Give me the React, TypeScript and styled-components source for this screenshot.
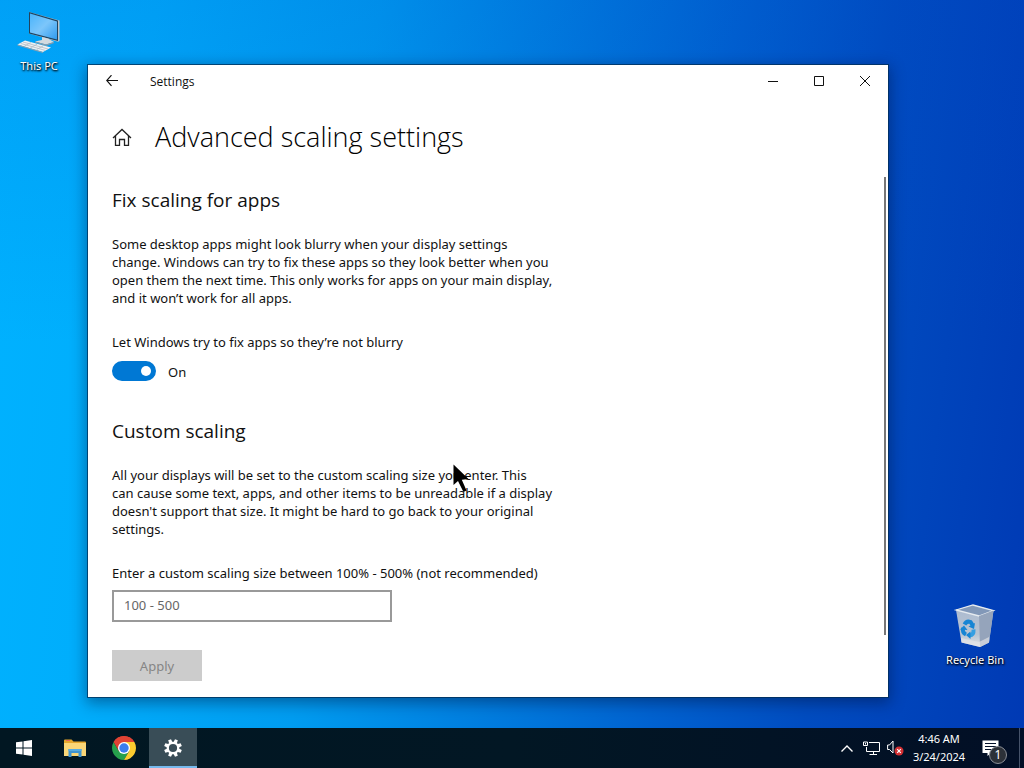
import React, { useState } from "react";
import styled, { createGlobalStyle } from "styled-components";

const headingFont = `"Open Sans", "Noto Sans", sans-serif`;

const GlobalStyle = createGlobalStyle`
  *, *::before, *::after { box-sizing: border-box; }
  body {
    margin: 0;
    color: #111;
    font-family: "Noto Sans", "Open Sans", sans-serif;
    font-size: 13px;
    line-height: 18px;
  }
  button, input { font: inherit; color: inherit; }
  h1, h2, p { margin: 0; font-weight: 400; }
`;

const Screen = styled.div`
  display: flex;
  flex-direction: column;
  min-height: 100vh;
  background:
    linear-gradient(180deg, rgba(0, 70, 200, 0.16) 0%, rgba(0, 120, 230, 0) 45%),
    linear-gradient(97deg, #00b2ff 0%, #00aefc 14%, #009cf0 34%, #007fe0 50%, #0062d0 66%, #004cc0 80%, #0039b4 100%);
`;

const Desktop = styled.main`
  position: relative;
  flex: 1;
  padding: 65px 136px 31px 88px;
`;

const DesktopIcon = styled.button<{ $corner: "start" | "end" }>`
  position: absolute;
  ${(p) => (p.$corner === "start" ? "top: 10px; left: 0;" : "bottom: 60px; right: 10px;")}
  display: flex;
  flex-direction: column;
  align-items: center;
  gap: 4px;
  width: 78px;
  padding: 0;
  border: 0;
  background: none;
  color: #fff;
  font-size: 11px;
  line-height: 16px;
  white-space: nowrap;
  text-shadow: 1px 1px 2px #000, 0 1px 2px rgba(0, 0, 0, 0.8);
`;

const Window = styled.section`
  position: relative;
  background: #fff;
  box-shadow: 0 0 0 1px rgba(0, 45, 85, 0.75), 0 4px 14px 2px rgba(0, 15, 50, 0.42);
`;

const TitleBar = styled.header`
  display: flex;
  align-items: stretch;
  height: 32px;
`;

const BackButton = styled.button`
  display: grid;
  place-items: center;
  width: 48px;
  padding: 0;
  border: 0;
  background: none;
`;

const WindowTitle = styled.span`
  flex: 1;
  padding-left: 14px;
  font-family: ${headingFont};
  font-size: 12px;
  line-height: 34px;
`;

const CaptionButton = styled.button`
  display: grid;
  place-items: center;
  width: 46px;
  padding: 0;
  border: 0;
  background: none;
`;

const PageHeader = styled.div`
  display: flex;
  align-items: center;
  gap: 23px;
  padding: 20px 24px 0;
`;

const HomeLink = styled.a`
  display: flex;
  color: inherit;
`;

const PageTitle = styled.h1`
  color: #000;
  font-family: ${headingFont};
  font-size: 27px;
  font-weight: 350;
  line-height: 40px;
`;

const Content = styled.div`
  padding: 31px 24px 16px;
`;

const Section = styled.section`
  & + & { margin-top: 36px; }
`;

const SectionTitle = styled.h2`
  margin-bottom: 23px;
  font-family: ${headingFont};
  font-size: 19px;
  line-height: 24px;
`;

const Description = styled.p`
  max-width: 445px;
  margin-bottom: 26px;
`;

const FieldLabel = styled.label`
  display: block;
`;

const ToggleRow = styled.div`
  display: flex;
  align-items: flex-start;
  gap: 12px;
  margin-top: 10px;
  line-height: 22px;
`;

const Toggle = styled.input`
  appearance: none;
  display: flex;
  align-items: center;
  width: 44px;
  height: 20px;
  margin: 0;
  padding: 0 5px;
  border: 2px solid #333;
  border-radius: 10px;

  &::before {
    content: "";
    width: 10px;
    height: 10px;
    border-radius: 50%;
    background: #333;
  }
  &:checked {
    justify-content: flex-end;
    padding: 0 3px;
    border-color: #0078d4;
    background: #0078d4;
  }
  &:checked::before { background: #fff; }
`;

const SizeInput = styled.input`
  display: block;
  width: 280px;
  max-width: 100%;
  height: 32px;
  margin-top: 8px;
  padding: 0 10px 2px;
  border: 2px solid #999;
  border-radius: 0;
  background: #fff;
  &::placeholder { color: #666; opacity: 1; }
`;

const ApplyButton = styled.button`
  display: block;
  width: 90px;
  height: 31px;
  margin-top: 28px;
  padding: 0;
  border: 0;
  background: #ccc;
  &:disabled { color: #858585; }
`;

const ScrollThumb = styled.div`
  position: absolute;
  top: 112px;
  right: 2px;
  bottom: 62px;
  width: 2px;
  background: #777;
`;

const Pointer = styled.svg`
  position: absolute;
  top: 464px;
  left: 453px;
`;

const Taskbar = styled.footer`
  display: flex;
  height: 40px;
  color: #fff;
  background: linear-gradient(90deg, #011722 0%, #021724 50%, #020f26 100%);
`;

const TaskList = styled.nav`
  display: flex;
  flex: 1;
  gap: 1px;
`;

const TaskButton = styled.button<{ $active?: boolean; $start?: boolean }>`
  display: grid;
  place-items: center;
  width: ${(p) => (p.$start ? 50 : 48)}px;
  padding: ${(p) => (p.$active ? "2px 0 0" : p.$start ? "0 2px 0 0" : "0")};
  border: 0;
  border-bottom: ${(p) => (p.$active ? "2px solid #76b9ed" : "0")};
  background: ${(p) => (p.$active ? "#394d57" : "none")};
`;

const Tray = styled.div`
  display: flex;
  align-items: stretch;
`;

const TrayButton = styled.button<{ $width: number }>`
  display: grid;
  place-items: center;
  width: ${(p) => p.$width}px;
  padding: 0;
  border: 0;
  background: none;
`;

const Clock = styled.button`
  width: 64px;
  padding: 0;
  border: 0;
  background: none;
  font-size: 11px;
  line-height: 18px;
  white-space: nowrap;
`;

const Time = styled.span`
  display: block;
`;

const ActionCenter = styled.button`
  position: relative;
  display: grid;
  place-items: center;
  width: 48px;
  padding: 0 10px 0 0;
  border: 0;
  background: none;
`;

const Badge = styled.span`
  position: absolute;
  right: 12px;
  bottom: 4px;
  width: 18px;
  height: 18px;
  border: 1px solid #8b8f96;
  border-radius: 50%;
  background: #2c3138;
  font-size: 12px;
  line-height: 16px;
  text-align: center;
`;

const ShowDesktop = styled.button`
  width: 5px;
  padding: 0;
  border: 0;
  border-left: 1px solid #46536a;
  background: none;
`;

const ComputerIcon = () => (
  <svg width="44" height="44" viewBox="0 0 44 44" aria-hidden="true">
    <defs>
      <linearGradient id="screen" x1="0" y1="0" x2="1" y2="1">
        <stop offset="0" stopColor="#49b4fb" />
        <stop offset="0.5" stopColor="#7cc6fb" />
        <stop offset="1" stopColor="#2f9aee" />
      </linearGradient>
    </defs>
    <path d="M12 2 L42.500 10.500 V31 L41 31.800 L12 23.500 Z" fill="#b9c4cc" />
    <path d="M12 2 L41 10.500 V31 L12 23.500 Z" fill="#21435e" />
    <path d="M13 3.500 L40 11.400 V29.600 L13 22.600 Z" fill="url(#screen)" />
    <path d="M25 27 L31 28.400 L37 32 L29 34.500 L18 31.400 L25 30 Z" fill="#d3dadf" />
    <path d="M18 31.400 L29 34.500 L37 32 V33 L29 36 L18 32.600 Z" fill="#8b9ba8" />
    <path d="M8 30.500 L34 37.500 L26 42 L0.500 34.500 Z" fill="#eef1f3" />
    <path d="M0.500 34.500 L26 42 V43 L0.500 35.500 Z" fill="#8fa0ad" />
    <path d="M6 32 L31 39 M3.500 33.400 L28.500 40.500 M14 32.500 L7.500 36 M20 34.200 L13.500 37.800 M26 36 L19.500 39.600" stroke="#b3bdc5" strokeWidth="0.8" fill="none" />
  </svg>
);

const RecycleIcon = () => (
  <svg width="44" height="44" viewBox="0 0 44 44" aria-hidden="true">
    <defs>
      <linearGradient id="bin" x1="0" y1="0" x2="0" y2="1">
        <stop offset="0" stopColor="#a9b9d0" />
        <stop offset="0.7" stopColor="#b9c4d2" />
        <stop offset="1" stopColor="#e0e3e6" />
      </linearGradient>
    </defs>
    <path d="M3 6 L20 1 L40.500 6.500 L36 38.500 L27 43 L8.500 38.500 Z" fill="url(#bin)" />
    <path d="M3 6 L20 1 L40.500 6.500 L26 12 Z" fill="#8298b8" stroke="#e6ebf0" strokeWidth="1.300" />
    <path d="M26 12 L40.500 6.500 L36 38.500 L27 43 Z" fill="#95a4bb" />
    <path d="M8 34 L26 38 L36 33 L36 38.500 L27 43 L8.500 38.500 Z" fill="#e3e5e8" opacity="0.65" />
    <g fill="none" stroke="#1685d4" strokeWidth="4">
      <path d="M11.500 20.500 Q13.500 16.500 17.500 18 L19.500 21" />
      <path d="M10 24 Q9 28.500 13 30.500" />
      <path d="M16.500 31.500 Q21 31 20.500 25.500" stroke="#359fe2" />
    </g>
    <path d="M22 19 L21 25 L15.500 22.500 Z M7 25.500 L11 21.500 L14.500 26 Z M17.500 27.500 V35 L13 31 Z" fill="#1685d4" />
  </svg>
);

const WindowsLogo = () => (
  <svg width="16" height="16" viewBox="0 0 16 16" fill="#fff" aria-hidden="true">
    <path d="M0 2.300 L6.500 1.400 V7.500 H0 Z M7.500 1.200 L16 0 V7.500 H7.500 Z M0 8.500 H6.500 V14.600 L0 13.700 Z M7.500 8.500 H16 V16 L7.500 14.800 Z" />
  </svg>
);

const ExplorerIcon = () => (
  <svg width="22" height="18" viewBox="0 0 22 18" aria-hidden="true">
    <path d="M0 1.500 Q0 0.500 1 0.500 H7.500 L9.500 2.500 H21 Q22 2.500 22 3.500 V17 H0 Z" fill="#e5a72c" />
    <path d="M0 4 H22 V17 H0 Z" fill="#fad677" />
    <path d="M2 1.500 H6" stroke="#e7695a" strokeWidth="1" />
    <path d="M4.500 10 H17.500 V18 H14.500 V14 H7.500 V18 H4.500 Z" fill="#3f93cf" />
    <path d="M4.500 10 H17.500 V12 H4.500 Z" fill="#57abe0" />
  </svg>
);

const ChromeIcon = () => (
  <svg width="24" height="24" viewBox="0 0 24 24" aria-hidden="true">
    <path d="M12 12 L1.610 6 A12 12 0 0 1 22.390 6 Z" fill="#e04334" />
    <path d="M1.610 6 A12 12 0 0 0 12 24 L17.200 15 L12 12 L6.800 15 Z" fill="#26a04c" />
    <path d="M22.390 6 H12 L17.200 15 L12 24 A12 12 0 0 0 22.390 6 Z" fill="#fccb2f" />
    <path d="M12 6 H22.390 A12 12 0 0 0 1.610 6 L6.800 15 Z" fill="#e04334" />
    <circle cx="12" cy="12" r="6" fill="#fff" />
    <circle cx="12" cy="12" r="4.700" fill="#3b7ded" />
  </svg>
);

const GearIcon = () => (
  <svg width="18" height="18" viewBox="-9 -9 18 18" aria-hidden="true">
    <g fill="#fff">
      {[0, 45, 90, 135, 180, 225, 270, 315].map((a) => (
        <path key={a} d="M-1.900 -5 L-1.500 -8.900 H1.500 L1.900 -5 Z" transform={`rotate(${a + 22.5})`} />
      ))}
    </g>
    <circle r="5.200" fill="none" stroke="#fff" strokeWidth="2.200" />
  </svg>
);

const CaptionGlyph = ({ d }: { d: string }) => (
  <svg width="12" height="12" viewBox="0 0 12 12" fill="none" stroke="#111" aria-hidden="true">
    <path d={d} />
  </svg>
);

export default function App() {
  const [on, setOn] = useState(true);
  const [size, setSize] = useState("");

  return (
    <Screen>
      <GlobalStyle />
      <Desktop>
        <DesktopIcon $corner="start">
          <ComputerIcon />
          This PC
        </DesktopIcon>
        <DesktopIcon $corner="end">
          <RecycleIcon />
          Recycle Bin
        </DesktopIcon>

        <Window aria-label="Settings">
          <TitleBar>
            <BackButton aria-label="Back">
              <svg width="12" height="12" viewBox="0 0 12 12" fill="none" stroke="#111" strokeWidth="1.200" aria-hidden="true">
                <path d="M5.500 0.200 L0.700 5.500 L5.500 10.800 M0.800 5.500 H12" />
              </svg>
            </BackButton>
            <WindowTitle>Settings</WindowTitle>
            <CaptionButton aria-label="Minimize">
              <CaptionGlyph d="M1 6.500 H11" />
            </CaptionButton>
            <CaptionButton aria-label="Maximize">
              <CaptionGlyph d="M1.500 1.500 H10.500 V10.500 H1.500 Z" />
            </CaptionButton>
            <CaptionButton aria-label="Close">
              <CaptionGlyph d="M1 1 L11 11 M11 1 L1 11" />
            </CaptionButton>
          </TitleBar>

          <PageHeader>
            <HomeLink href="#home" aria-label="Home">
              <svg width="20" height="18" viewBox="0 0 20 18" fill="none" stroke="#222" strokeWidth="1.300" aria-hidden="true">
                <path d="M1 10 L10 1.500 L19 10 M3.500 8 V17.400 H7.500 V11.500 H12.500 V17.400 H16.500 V8" />
              </svg>
            </HomeLink>
            <PageTitle>Advanced scaling settings</PageTitle>
          </PageHeader>

          <Content>
            <Section>
              <SectionTitle>Fix scaling for apps</SectionTitle>
              <Description>
                Some desktop apps might look blurry when your display settings change. Windows can try to fix these
                apps so they look better when you open them the next time. This only works for apps on your main
                display, and it won’t work for all apps.
              </Description>
              <FieldLabel htmlFor="fix-apps">Let Windows try to fix apps so they’re not blurry</FieldLabel>
              <ToggleRow>
                <Toggle
                  id="fix-apps"
                  type="checkbox"
                  role="switch"
                  checked={on}
                  onChange={(e) => setOn(e.target.checked)}
                />
                <span>{on ? "On" : "Off"}</span>
              </ToggleRow>
            </Section>

            <Section>
              <SectionTitle>Custom scaling</SectionTitle>
              <Description>
                All your displays will be set to the custom scaling size you enter. This
                <br />
                can cause some text, apps, and other items to be unreadable if a display doesn't support that size. It
                might be hard to go back to your original settings.
              </Description>
              <FieldLabel htmlFor="custom-size">
                Enter a custom scaling size between 100% - 500% (not recommended)
              </FieldLabel>
              <SizeInput
                id="custom-size"
                type="text"
                placeholder="100 - 500"
                value={size}
                onChange={(e) => setSize(e.target.value)}
              />
              <ApplyButton disabled={size === ""}>Apply</ApplyButton>
            </Section>
          </Content>
          <ScrollThumb />
        </Window>

        <Pointer width="17" height="29" viewBox="0 0 17 29" aria-hidden="true">
          <path d="M0.500 0.500 V21 L5 17 L10.500 28 L13.500 26.500 L8.800 15.800 L15.500 15 Z" fill="#000" />
        </Pointer>
      </Desktop>

      <Taskbar>
        <TaskList>
          <TaskButton $start aria-label="Start">
            <WindowsLogo />
          </TaskButton>
          <TaskButton aria-label="File Explorer">
            <ExplorerIcon />
          </TaskButton>
          <TaskButton aria-label="Google Chrome">
            <ChromeIcon />
          </TaskButton>
          <TaskButton $active aria-label="Settings">
            <GearIcon />
          </TaskButton>
        </TaskList>
        <Tray>
          <TrayButton $width={24} aria-label="Show hidden icons">
            <svg width="12" height="7" viewBox="0 0 12 7" fill="none" stroke="#fff" strokeWidth="1.400" aria-hidden="true">
              <path d="M0.500 6.500 L6 1 L11.500 6.500" />
            </svg>
          </TrayButton>
          <TrayButton $width={24} aria-label="Network">
            <svg width="17" height="14" viewBox="0 0 17 14" fill="none" stroke="#fff" aria-hidden="true">
              <path d="M6 1.500 H16.500 V10.500 H3.500 V6 M10.500 10.500 V13.500 M6.500 13.500 H14 M0.500 1 H4.500 V4.500 H0.500 Z M2.500 2 V3.500" />
            </svg>
          </TrayButton>
          <TrayButton $width={24} aria-label="Volume muted">
            <svg width="17" height="16" viewBox="0 0 17 16" aria-hidden="true">
              <path d="M0.600 5 H2.500 L6 1 V13 L2.500 9.500 H0.600 Z" fill="none" stroke="#fff" />
              <circle cx="12" cy="11" r="4.500" fill="#d32f32" />
              <path d="M10.200 9.200 L13.800 12.800 M13.800 9.200 L10.200 12.800" stroke="#fff" strokeWidth="1.200" />
            </svg>
          </TrayButton>
          <Clock>
            <Time>4:46 AM</Time>
            <Time>3/24/2024</Time>
          </Clock>
          <ActionCenter aria-label="Notifications">
            <svg width="17" height="16" viewBox="0 0 17 16" aria-hidden="true">
              <path d="M0.500 0.500 H16.500 V13 H9 L5.500 16 V13 H0.500 Z" fill="#fff" />
              <path d="M3 3.500 H14 M3 6.500 H14 M3 9.500 H14" stroke="#04122a" />
            </svg>
            <Badge>1</Badge>
          </ActionCenter>
          <ShowDesktop aria-label="Show desktop" />
        </Tray>
      </Taskbar>
    </Screen>
  );
}
